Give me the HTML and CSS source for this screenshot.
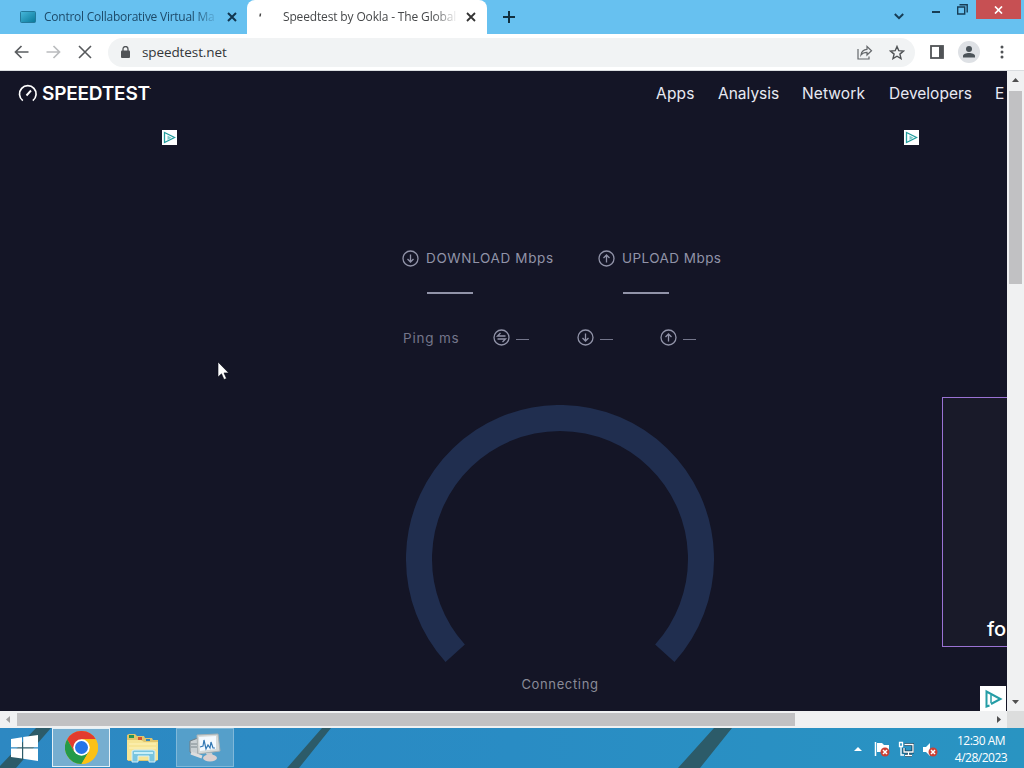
FILE: index.html
```html
<!DOCTYPE html>
<html lang="en">
<head>
    <meta charset="UTF-8">
    <meta name="viewport" content="width=device-width, initial-scale=1.0">
    <title>Speedtest by Ookla</title>
    <link rel="stylesheet" href="styles.css">
</head>
<body>
    <!-- Tabs -->
    <div class="tab-strip">
        <div class="tab">
            <svg class="favicon" width="16" height="12" viewBox="0 0 16 12">
                <defs><linearGradient id="screen" x2="1" y2="1"><stop stop-color="#48b8dc"/><stop offset="1" stop-color="#087899"/></linearGradient></defs>
                <rect x=".5" y=".5" width="15" height="11" rx="1" fill="url(#screen)" stroke="#23799b"/>
            </svg>
            <span class="tab-title">Control Collaborative Virtual Ma</span>
            <svg class="tab-close" width="10" height="10" viewBox="0 0 10 10"><path d="M1 1l8 8M9 1l-8 8" stroke="#12364f" stroke-width="2"/></svg>
        </div>
        <div class="tab active">
            <svg class="favicon" width="16" height="12" viewBox="0 0 16 12"><path d="M1.500 2.500L1 5.500" stroke="#444" stroke-width="1.500"/></svg>
            <span class="tab-title">Speedtest by Ookla - The Global</span>
            <svg class="tab-close" width="10" height="10" viewBox="0 0 10 10"><path d="M1 1l8 8M9 1l-8 8" stroke="#333" stroke-width="1.8"/></svg>
        </div>
        <svg class="new-tab" width="12" height="12" viewBox="0 0 12 12"><path d="M6 0v12M0 6h12" stroke="#12303f" stroke-width="2"/></svg>
        <div class="window-controls">
            <svg class="chevron" width="10" height="7" viewBox="0 0 10 7"><path d="M.8 1L5 5.2 9.2 1" fill="none" stroke="#173d55" stroke-width="2"/></svg>
            <svg class="minimize" width="8" height="2" viewBox="0 0 8 2"><rect width="8" height="2" fill="#173d55"/></svg>
            <svg class="restore" width="11" height="11" viewBox="0 0 11 11"><path d="M.7 3h7v7h-7zM2.5 .8h7.700v7.700" fill="none" stroke="#173d55" stroke-width="1.400"/></svg>
            <div class="close"><svg width="9" height="8" viewBox="0 0 9 8"><path d="M1 .5l7 7M8 .5l-7 7" stroke="#fff" stroke-width="1.700"/></svg></div>
        </div>
    </div>

    <!-- Toolbar -->
    <div class="toolbar">
        <svg width="15" height="14" viewBox="0 0 15 14"><path d="M14.500 7H1.500M7.500 1L1.500 7l6 6" fill="none" stroke="#5a5d60" stroke-width="1.700"/></svg>
        <svg width="15" height="14" viewBox="0 0 15 14"><path d="M.5 7h13M7.500 1l6 6-6 6" fill="none" stroke="#babcbe" stroke-width="1.700"/></svg>
        <svg width="14" height="14" viewBox="0 0 14 14"><path d="M1 1l12 12M13 1L1 13" stroke="#56595c" stroke-width="1.600"/></svg>
        <div class="address">
            <svg width="9" height="12" viewBox="0 0 9 12"><rect y="4.500" width="9" height="7.500" rx="1" fill="#505356"/><path d="M2 5V3a2.500 2.500 0 0 1 5 0v2" fill="none" stroke="#505356" stroke-width="1.300"/></svg>
            <span class="url">speedtest.net</span>
            <svg width="16" height="15" viewBox="0 0 16 15"><path d="M1 4v10h11v-2.500M4 10c.5-3.600 2.500-5.500 6-5.700V1.500l4.500 4.300-4.500 4.200V7.300C7.500 7.300 5.500 8 4 10z" fill="none" stroke="#65686b" stroke-width="1.200"/></svg>
            <svg width="16" height="15" viewBox="0 0 16 15"><path d="M8 1.500l1.800 4.200 4.600.4-3.500 3 1.100 4.500L8 11.200l-4 2.400 1.100-4.500-3.500-3 4.600-.4z" fill="none" stroke="#505356" stroke-width="1.400"/></svg>
        </div>
        <svg class="side-panel" width="14" height="14" viewBox="0 0 14 14"><rect x="1" y="1" width="12" height="12" fill="#fff" stroke="#505356" stroke-width="1.800"/><rect x="9" y="1" width="4" height="12" fill="#505356"/></svg>
        <svg class="profile" width="22" height="22" viewBox="0 0 22 22"><circle cx="11" cy="11" r="11" fill="#dee1e5"/><circle cx="11" cy="8" r="3" fill="#4b5359"/><path d="M5 16.500v-1.500c0-4 12-4 12 0v1.500z" fill="#4b5359"/></svg>
        <svg class="more" width="4" height="14" viewBox="0 0 4 14"><circle cx="2" cy="2" r="1.500" fill="#505356"/><circle cx="2" cy="7" r="1.500" fill="#505356"/><circle cx="2" cy="12" r="1.500" fill="#505356"/></svg>
    </div>

    <!-- Web page and its scrollbar -->
    <div class="viewport">
        <div class="page">
            <div class="site-header">
                <svg width="20" height="18" viewBox="0 0 20 18"><path d="M4.800 16.600A8.300 8.300 0 1 1 14.800 16.600" fill="none" stroke="#fff" stroke-width="1.700"/><path d="M8.500 11.500l4.500-5" stroke="#fff" stroke-width="1.900"/></svg>
                <span class="brand">SPEEDTEST</span><span class="mark">·</span>
                <div class="nav">
                    <span class="nav-apps">Apps</span>
                    <span class="nav-analysis">Analysis</span>
                    <span class="nav-network">Network</span>
                    <span class="nav-developers">Developers</span>
                    <span>E</span>
                </div>
            </div>

            <div class="ad-row">
                <svg class="ad-choice" viewBox="0 0 15 15"><path d="M2.500 12.500v-10L12.500 7.500z" fill="none" stroke="#229c9c" stroke-width="1.300"/><path d="M5.500 5.500v4.500l4-2.300z" fill="#7ccaca"/></svg>
                <svg class="ad-choice" viewBox="0 0 15 15"><path d="M2.500 12.500v-10L12.500 7.500z" fill="none" stroke="#229c9c" stroke-width="1.300"/><path d="M5.500 5.500v4.500l4-2.300z" fill="#7ccaca"/></svg>
            </div>

            <div class="content">
                <div class="test">
                    <div class="speeds">
                        <div class="speed">
                            <svg class="circle-icon" viewBox="0 0 17 17"><circle cx="8.500" cy="8.500" r="7.500"/><path d="M8.500 4.500v7.500M5.500 9l3 3 3-3"/></svg>
                            <div>
                                <div class="speed-label download">DOWNLOAD Mbps</div>
                                <div class="speed-value"></div>
                            </div>
                        </div>
                        <div class="speed">
                            <svg class="circle-icon" viewBox="0 0 17 17"><circle cx="8.500" cy="8.500" r="7.500"/><path d="M8.500 12.500V5M5.500 8l3-3 3 3"/></svg>
                            <div>
                                <div class="speed-label upload">UPLOAD Mbps</div>
                                <div class="speed-value"></div>
                            </div>
                        </div>
                    </div>
                    <div class="pings">
                        <span class="ping-label">Ping ms</span>
                        <div class="ping">
                            <svg class="circle-icon" viewBox="0 0 17 17"><circle cx="8.500" cy="8.500" r="7.500"/><path d="M12.500 7H4.500l3-3M4.500 10h8l-3 3"/></svg>
                            <span class="dash"></span>
                        </div>
                        <div class="ping">
                            <svg class="circle-icon" viewBox="0 0 17 17"><circle cx="8.500" cy="8.500" r="7.500"/><path d="M8.500 4.500v7.500M5.500 9l3 3 3-3"/></svg>
                            <span class="dash"></span>
                        </div>
                        <div class="ping">
                            <svg class="circle-icon" viewBox="0 0 17 17"><circle cx="8.500" cy="8.500" r="7.500"/><path d="M8.500 12.500V5M5.500 8l3-3 3 3"/></svg>
                            <span class="dash"></span>
                        </div>
                    </div>
                    <svg class="gauge" width="308" height="260" viewBox="0 0 308 260"><path d="M49.200 248.300A141 141 0 1 1 258.800 248.300" fill="none" stroke="#202e4f" stroke-width="26"/></svg>
                    <div class="status"><span>Connecting</span></div>
                </div>
                <div class="promo">fo</div>
            </div>

            <svg class="ad-corner" viewBox="0 0 26 25"><path d="M9.500 19.500l-3 1V5.500L20.500 13 11 18" fill="none" stroke="#249da6" stroke-width="2"/><path d="M11 9v8" stroke="#249da6" stroke-width="1.500"/></svg>
            <svg class="cursor" width="14" height="20" viewBox="0 0 14 20"><path d="M1 1v15l3.500-3.200 2.500 5.700 2.500-1-2.500-5.600h4.700z" fill="#fff" stroke="#090b17" stroke-width=".6"/></svg>
        </div>
        <div class="scroll-y">
            <svg class="arrow-up" width="7" height="4" viewBox="0 0 7 4"><path d="M3.500 0L7 4H0z" fill="#505050"/></svg>
            <div class="thumb-y"></div>
            <svg class="arrow-down" width="7" height="4" viewBox="0 0 7 4"><path d="M0 0h7L3.500 4z" fill="#505050"/></svg>
        </div>
    </div>
    <div class="scroll-x">
        <svg class="arrow-left" width="4" height="7" viewBox="0 0 4 7"><path d="M4 0v7L0 3.500z" fill="#a0a0a0"/></svg>
        <div class="thumb-x"></div>
        <svg class="arrow-right" width="4" height="7" viewBox="0 0 4 7"><path d="M0 0v7l4-3.500z" fill="#505050"/></svg>
        <div class="corner"></div>
    </div>

    <!-- Taskbar -->
    <div class="taskbar">
        <svg class="wallpaper" width="1024" height="40" viewBox="0 0 1024 40"><path d="M36 0h15L16 40H0v-2zM322 0h9L299 40H287zM714 0h18L700 40H678z" fill="#2c5b69"/></svg>
        <div class="start">
            <svg width="27" height="26" viewBox="0 0 27 26"><path d="M0 4l11-1.700v10H0zM12.200 2.100L27 0v12.300H12.200zM0 13.500h11v10L0 22zM12.200 13.500H27V26l-14.800-2.200z" fill="#fff"/></svg>
        </div>
        <div class="task chrome">
            <svg width="33" height="33" viewBox="0 0 32 32"><circle cx="16" cy="16" r="16" fill="#fbc116"/><path d="M2.140 8A16 16 0 0 1 29.860 8H16l-7 12z" fill="#e33b2e"/><path d="M2.140 8A16 16 0 0 0 16 32l7-12-7-1-7 1z" fill="#249a48"/><path d="M16 8h13.860A16 16 0 0 1 16 32l7-12z" fill="#fbc116"/><circle cx="16" cy="16" r="8" fill="#fff"/><circle cx="16" cy="16" r="6.300" fill="#2674e8"/></svg>
        </div>
        <div class="task">
            <svg width="34" height="30" viewBox="0 0 34 30"><path d="M1 5V2l2-1h6l2 2h7l1 2h7l1 2h5v20l-2 1H2L1 26z" fill="#e0c56c"/><path d="M3 2h5v3H3z" fill="#259456"/><path d="M12 4h4v3h-4z" fill="#d45331"/><path d="M20 6h4v2h-4z" fill="#3487b9"/><path d="M1 7h14l3 2h14v18H1z" fill="#f6e596"/><path d="M3 11h27M3 15h27" stroke="#fff4bc"/><path d="M6 29V18l2-1h19l2 1v11h-6v-6H12v6z" fill="#79c5df" stroke="#d4eff7"/><path d="M8 20h19" stroke="#c8eff8" stroke-width="2"/></svg>
        </div>
        <div class="task monitor">
            <svg width="32" height="29" viewBox="0 0 32 29"><path d="M1 8l8-3v17l-8-3z" fill="#c9d0d3" stroke="#737f86"/><path d="M2 11h6M2 14h6" stroke="#7c888e"/><path d="M8 2l21-1 2 17-22 3z" fill="#d6dad9" stroke="#aab2b4"/><path d="M10 4l17-1v13l-16 2z" fill="#f4faff"/><path d="M11 14l3-1 1-6 2 9 2-4 2 3 1-6 2 6h2" fill="none" stroke="#3278b4" stroke-width="1.200"/><path d="M17 20h6l1 3h-6z" fill="#c9cfd1"/><ellipse cx="21" cy="25" rx="7" ry="3.500" fill="#dcd0cf"/><path d="M2 20l11 4" stroke="#ddd" stroke-width="3"/></svg>
        </div>
        <div class="tray">
            <svg width="8" height="4" viewBox="0 0 8 4"><path d="M4 0l4 4H0z" fill="#fff"/></svg>
            <svg width="16" height="16" viewBox="0 0 16 16"><path d="M1.500 1v14" stroke="#fff" stroke-width="1.500"/><path d="M3 2h5l2 2h5v7H3z" fill="#fff"/><circle cx="11" cy="11" r="4.500" fill="#cb4034"/><path d="M9 9l4 4M13 9l-4 4" stroke="#fff" stroke-width="1.500"/></svg>
            <svg width="16" height="16" viewBox="0 0 16 16"><path d="M6.500 3.500H15v7.500H6V7M10.500 11v3M7 14.500h7" fill="none" stroke="#103e59" stroke-width="3"/><path d="M6.500 3.500H15v7.500H6V7M10.500 11v3M7 14.500h7M1.500 1.500h3v4h-3zM3 5.500V14h3" fill="none" stroke="#fff" stroke-width="1.300"/></svg>
            <svg width="16" height="16" viewBox="0 0 16 16"><path d="M1 6h3l4-4v13l-4-4H1z" fill="#fff"/><circle cx="11" cy="11" r="4.500" fill="#cb4034"/><path d="M9 9l4 4M13 9l-4 4" stroke="#fff" stroke-width="1.500"/></svg>
        </div>
        <div class="clock">
            <div class="time">12:30 AM</div>
            <div class="date">4/28/2023</div>
        </div>
    </div>
</body>
</html>
```
FILE: styles.css
```css
/* General Reset */
* {
    box-sizing: border-box;
}

body {
    margin: 0;
    width: 1024px;
    height: 768px;
    overflow: hidden;
    display: flex;
    flex-direction: column;
    font-family: "Open Sans", "Noto Sans", sans-serif;
    background: #141526;
}

svg {
    display: block;
    flex-shrink: 0;
}

/* Tabs */
.tab-strip {
    height: 34px;
    background: #67c1f0;
    display: flex;
}

.tab {
    width: 247px;
    padding: 0 10px 1px 20px;
    display: flex;
    align-items: center;
    font-size: 12px;
    color: #1d4a69;
    background: #67c1f0;
    border-radius: 0 0 8px 0;
}

.tab.active {
    width: 240px;
    padding: 0 11px 1px 12px;
    background: #fff;
    border-radius: 8px 8px 0 0;
    color: #46484a;
}

.tab-title {
    width: 173px;
    margin-left: 8px;
    overflow: hidden;
    white-space: nowrap;
    letter-spacing: -0.25px;
    -webkit-mask-image: linear-gradient(to right, #000 150px, transparent 175px);
    mask-image: linear-gradient(to right, #000 150px, transparent 175px);
}

.active .tab-title {
    letter-spacing: -0.15px;
}

.tab-close {
    margin-left: auto;
}

.new-tab {
    margin: 11px 0 0 16px;
}

.window-controls {
    margin-left: auto;
    display: flex;
}

.chevron {
    margin: 13px 28px 0 0;
}

.minimize {
    margin: 11px 17px 0 0;
}

.restore {
    margin: 4px 8px 0 0;
}

.close {
    width: 45px;
    height: 19px;
    margin-right: 3px;
    background: #c75053;
    display: flex;
    align-items: center;
    justify-content: center;
}

/* Toolbar */
.toolbar {
    height: 37px;
    padding: 0 20px 0 14px;
    display: flex;
    align-items: center;
    gap: 17px;
    background: #fff;
    border-bottom: 1px solid #dadde0;
}

.address {
    width: 809px;
    height: 29px;
    margin-left: -1px;
    padding: 0 10px 0 13px;
    display: flex;
    align-items: center;
    gap: 16px;
    background: #f1f3f4;
    border-radius: 15px;
}

.url {
    flex: 1;
    margin-left: -4px;
    padding-bottom: 1px;
    font-size: 13.5px;
    letter-spacing: -0.1px;
    color: #333639;
}

.side-panel {
    margin-left: -2px;
}

.profile {
    margin-left: -3px;
}

.more {
    margin-left: 3px;
}

/* Web page */
.viewport {
    height: 640px;
    display: flex;
}

.page {
    position: relative;
    width: 1007px;
    overflow: hidden;
    background: #141526;
    font-family: Inter, sans-serif;
    display: flex;
    flex-direction: column;
}

.site-header {
    height: 44px;
    padding-left: 18px;
    display: flex;
    align-items: center;
    flex-shrink: 0;
    color: #fff;
}

.brand {
    width: 107px;
    margin-left: 4px;
    padding-top: 1px;
    font-size: 19px;
    font-weight: 600;
    letter-spacing: -0.2px;
}

.mark {
    width: 4px;
    font-size: 8px;
    margin-top: -10px;
}

.nav {
    margin-left: 503px;
    display: flex;
    font-size: 15.5px;
    font-weight: 400;
    color: #e8e9f3;
}

.nav span {
    flex-shrink: 0;
}

.nav-apps {
    width: 62px;
    letter-spacing: 0.2px;
}

.nav-analysis {
    width: 84px;
}

.nav-network {
    width: 87px;
    letter-spacing: 0.1px;
}

.nav-developers {
    width: 106px;
}

.ad-row {
    height: 30px;
    padding: 15px 88px 0 162px;
    display: flex;
    justify-content: space-between;
}

.ad-choice {
    width: 15px;
    height: 15px;
    background: #fff;
}

.content {
    display: flex;
    height: 566px;
}

/* Results */
.test {
    width: 540px;
    margin-left: 402px;
    margin-top: 105px;
    flex-shrink: 0;
}

.speeds {
    display: flex;
    height: 79px;
}

.speed {
    width: 196px;
    display: flex;
    gap: 7px;
}

.circle-icon {
    width: 17px;
    height: 17px;
    fill: none;
    stroke: #9193a8;
    stroke-width: 1.3;
}

.speed-label {
    height: 17px;
    line-height: 17px;
    font-size: 13.5px;
    white-space: nowrap;
    color: #9193a8;
}

.download {
    letter-spacing: 0.65px;
}

.upload {
    letter-spacing: 0.45px;
}

.speed-value {
    width: 46px;
    height: 1.5px;
    margin: 25px 0 0 1px;
    background: #9193a8;
}

.pings {
    display: flex;
    align-items: center;
    height: 17px;
}

.ping-label {
    width: 91px;
    padding-left: 1px;
    font-size: 13.5px;
    letter-spacing: 0.8px;
    color: #74768b;
}

.ping {
    width: 83.5px;
    display: flex;
    align-items: center;
    gap: 6px;
}

.dash {
    width: 13px;
    height: 1px;
    margin-top: 3px;
    background: #74768b;
}

.gauge {
    margin: 59px 0 0 4px;
}

.status {
    width: 316px;
    margin-top: 11px;
    text-align: center;
    font-size: 13px;
    line-height: 17px;
    letter-spacing: 0.65px;
    color: #8a8b98;
}

/* Promo box running off the right side */
.promo {
    width: 300px;
    height: 250px;
    margin-top: 252px;
    padding: 216px 0 0 44px;
    flex-shrink: 0;
    background: #191a29;
    border: 1px solid #9a72d4;
    color: #fff;
    font-size: 20px;
    line-height: 30px;
    font-weight: 500;
}

.ad-corner {
    position: absolute;
    right: 1px;
    bottom: 0;
    width: 26px;
    height: 25px;
    background: #fff;
}

.cursor {
    position: absolute;
    left: 217px;
    top: 290px;
}

/* Scrollbars */
.scroll-y {
    width: 17px;
    display: flex;
    flex-direction: column;
    align-items: center;
    background: #f0f1f2;
}

.arrow-up {
    margin-top: 7px;
}

.thumb-y {
    width: 13px;
    height: 193px;
    margin-top: 9px;
    background: #c1c1c3;
}

.arrow-down {
    margin: auto 0 7px;
}

.scroll-x {
    height: 17px;
    display: flex;
    align-items: center;
    background: #f0f1f2;
}

.arrow-left {
    margin-left: 6px;
}

.thumb-x {
    width: 778px;
    height: 13px;
    margin-left: 7px;
    background: #c1c1c3;
}

.arrow-right {
    margin-left: auto;
    margin-right: 6px;
}

.corner {
    width: 17px;
    height: 17px;
    background: #dcdddd;
}

/* Taskbar */
.taskbar {
    position: relative;
    height: 40px;
    display: flex;
    background: linear-gradient(to right, #2d88c2, #298cc4 50%, #2994c2);
}

.wallpaper {
    position: absolute;
    left: 0;
    top: 0;
}

.start,
.task,
.tray,
.clock {
    position: relative;
}

.start {
    width: 52px;
    padding: 7px 0 0 11px;
}

.task {
    width: 58px;
    height: 39px;
    margin-right: 4px;
    display: flex;
    align-items: center;
    justify-content: center;
}

.task.chrome {
    background: #76aed0;
    border: 1px solid #e3f0f7;
}

.task.monitor {
    background: #559fca;
    border: 1px solid #80b8d9;
}

.tray {
    margin-left: auto;
    margin-right: 16px;
    display: flex;
    align-items: center;
    gap: 8px;
    padding-top: 2px;
}

.tray svg:first-child {
    margin-right: 4px;
}

.clock {
    width: 54px;
    margin-right: 16px;
    padding-top: 5px;
    font-size: 12px;
    line-height: 16px;
    text-align: center;
    white-space: nowrap;
    color: #fff;
    letter-spacing: -0.5px;
}

.date {
    padding-top: 1px;
}
```
